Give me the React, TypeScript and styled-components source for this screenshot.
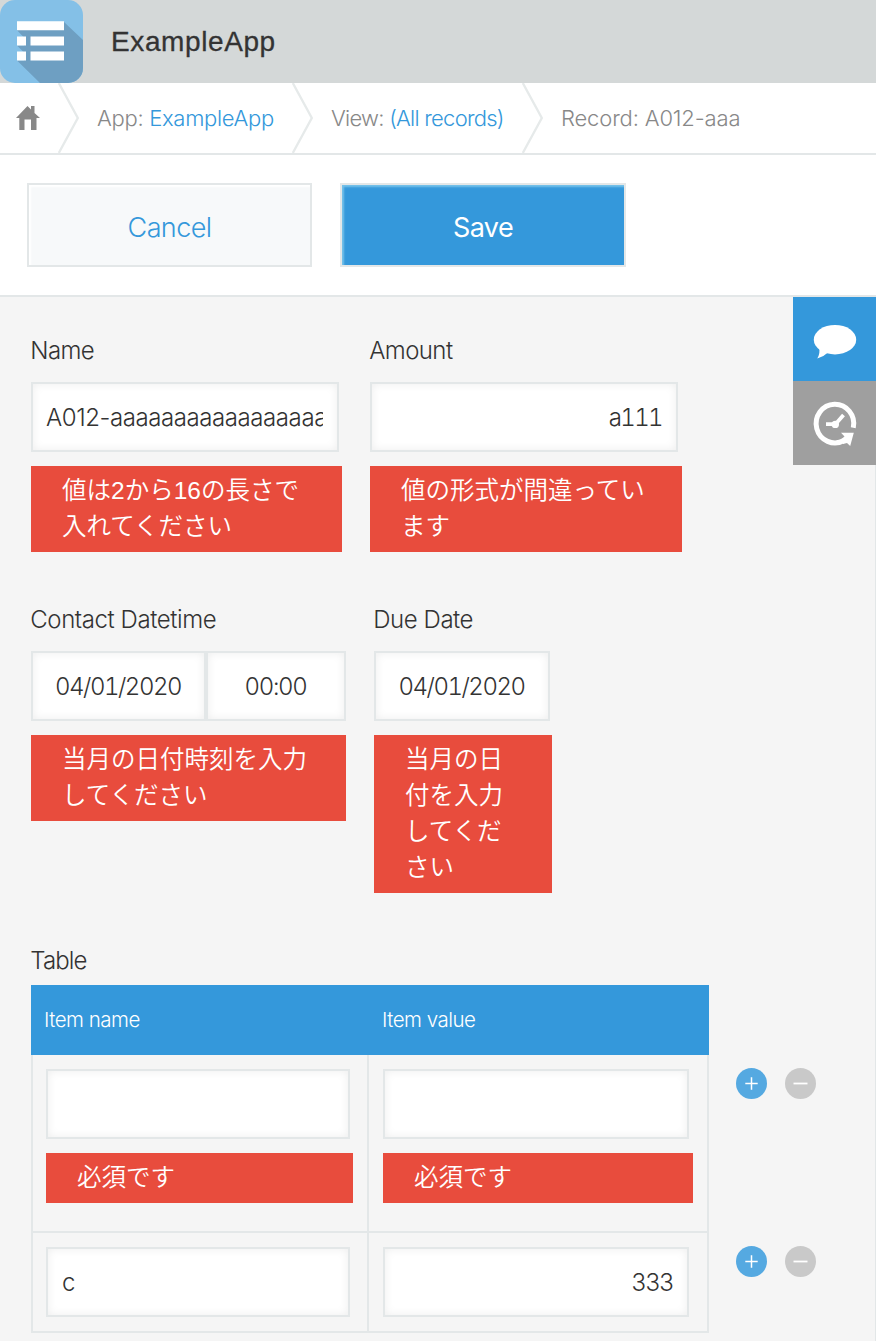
import React from "react";
import styled, { createGlobalStyle } from "styled-components";

const line = "#e3e7e8";
const blue = "#3498db";

const GlobalStyle = createGlobalStyle`
  *, *::before, *::after { box-sizing: border-box; }
  body {
    margin: 0;
    background: #f5f5f5;
    color: #333;
    font-family: Inter, "Noto Sans CJK JP", sans-serif;
    font-weight: 300;
  }
`;

const Page = styled.div`
  width: 876px;
  height: 1341px;
  overflow: hidden;
  display: flex;
  flex-direction: column;
`;

const Header = styled.header`
  display: flex;
  align-items: center;
  gap: 28px;
  height: 83px;
  flex: none;
  background: #d4d8d8;
`;

const AppTitle = styled.h1`
  margin: 0;
  font: 400 28px/36px "Liberation Sans", sans-serif;
  letter-spacing: 0.6px;
  -webkit-text-stroke: 0.3px #333;
`;

const Breadcrumbs = styled.nav`
  display: flex;
  height: 72px;
  flex: none;
  background: #fff;
  border-bottom: 2px solid ${line};
  color: #888;
  font-size: 22px;
  line-height: 70px;
  white-space: nowrap;
`;

const HomeLink = styled.a`
  display: flex;
  align-items: center;
  width: 58px;
  padding-left: 16px;
`;

const Crumb = styled.span<{ $width: number; $spacing: number }>`
  width: ${(p) => p.$width}px;
  padding-left: 18px;
  letter-spacing: ${(p) => p.$spacing}px;
`;

const CrumbLink = styled.a`
  color: ${blue};
`;

const Toolbar = styled.div`
  display: flex;
  gap: 28px;
  height: 142px;
  flex: none;
  padding: 28px 27px;
  background: #fff;
  border-bottom: 2px solid ${line};
`;

const Button = styled.button<{ $primary?: boolean }>`
  width: ${(p) => (p.$primary ? 286 : 285)}px;
  height: 84px;
  padding: 4px 0 0;
  border: 2px solid ${line};
  background: ${(p) => (p.$primary ? blue : "#f7f9fa")};
  color: ${(p) => (p.$primary ? "#fff" : blue)};
  box-shadow: inset 2px 2px 2px ${(p) => (p.$primary ? "#75c1e9" : "#fff")};
  font-family: inherit;
  font-size: 27px;
  font-weight: ${(p) => (p.$primary ? 380 : 300)};
  letter-spacing: -0.6px;
`;

const Body = styled.main`
  position: relative;
  flex: 1;
  padding: 36px 0 0 31px;
  border-right: 1px solid ${line};
`;

const SideTabs = styled.aside`
  position: absolute;
  top: 0;
  right: -1px;
  width: 83px;
`;

const SideTab = styled.div<{ $active?: boolean }>`
  height: 84px;
  background: ${(p) => (p.$active ? blue : "#9f9f9f")};
`;

const FieldRow = styled.div<{ $height: number }>`
  display: flex;
  align-items: flex-start;
  gap: 28px;
  height: ${(p) => p.$height}px;
`;

const Field = styled.div<{ $width: number }>`
  width: ${(p) => p.$width}px;
`;

const Label = styled.div<{ $spacing?: number; $compact?: boolean }>`
  height: ${(p) => (p.$compact ? 42 : 49)}px;
  font-size: 24px;
  line-height: 36px;
  letter-spacing: ${(p) => p.$spacing ?? -0.6}px;
  text-indent: -0.7px;
  white-space: nowrap;
`;

const InputGroup = styled.div`
  display: flex;
`;

const Input = styled.input<{ $width: number; $numeric?: boolean; $align?: string; $spacing?: number }>`
  display: block;
  width: ${(p) => p.$width}px;
  height: 70px;
  padding: 0 14px 0 13px;
  border: 2px solid ${line};
  border-radius: 0;
  outline: none;
  background: #fff;
  box-shadow: inset 0 0 10px #eee;
  color: #333;
  font-family: inherit;
  font-size: 24px;
  font-variant-numeric: ${(p) => (p.$numeric ? "tabular-nums" : "normal")};
  font-weight: 300;
  letter-spacing: ${(p) => p.$spacing ?? -0.42}px;
  text-align: ${(p) => p.$align ?? "left"};
`;

const ErrorBox = styled.div<{ $width: number }>`
  width: ${(p) => p.$width}px;
  margin-top: 14px;
  padding: 7px 31px;
  background: #e84c3d;
  color: #fff;
  font-family: "Liberation Sans", "Noto Sans CJK JP", sans-serif;
  font-size: 24.5px;
  font-weight: 350;
  line-height: 36px;
  word-break: break-all;
`;

const TableHead = styled.div`
  display: flex;
  width: 678px;
  height: 70px;
  background: ${blue};
  color: #fff;
  font-size: 20.5px;
  line-height: 70px;
`;

const HeadCell = styled.div<{ $width: number }>`
  width: ${(p) => p.$width}px;
  padding-left: 13px;
  letter-spacing: -0.5px;
`;

const TableRow = styled.div<{ $height: number }>`
  display: flex;
  height: ${(p) => p.$height}px;
`;

const Cell = styled.div<{ $width: number; $first?: boolean }>`
  width: ${(p) => p.$width}px;
  padding: 14px 0 0 ${(p) => (p.$first ? 13 : 14)}px;
  border-right: 2px solid ${line};
  border-bottom: 2px solid ${line};
  border-left: ${(p) => (p.$first ? `2px solid ${line}` : "0")};

  ${Input} {
    padding-left: 14px;
  }
`;

const RowActions = styled.div`
  display: flex;
  gap: 17px;
  padding: 12px 0 0 26px;
`;

const AppIcon = () => (
  <svg width="83" height="83" viewBox="0 0 83 83">
    <clipPath id="tile">
      <rect width="83" height="83" rx="15" />
    </clipPath>
    <g clipPath="url(#tile)">
      <rect width="83" height="83" fill="#84c0e7" />
      <path d="M64 22L83 40V83H40L17 60.500H24V52.500L17 45.500H24V37.500L17 30.300V29H64Z" fill="#6e9fc2" />
    </g>
    <path d="M17 21.3H64V30.3H17ZM17 36.6H26V45.6H17ZM30.500 36.600H64V45.600H30.500ZM17 51.500H26V60.500H17ZM30.500 51.500H64V60.500H30.500Z" fill="#fff" />
  </svg>
);

const HomeIcon = () => (
  <svg width="24" height="24" viewBox="0 0 24 24" fill="#888">
    <path d="M0 12L11.500 0L15 3.600V0H18.500V7L24 12H20.500V24H15V13.500H8.500V24H3.300V12Z" />
  </svg>
);

const Chevron = () => (
  <svg width="21" height="70" viewBox="0 0 21 70" fill="none" stroke="#e6eaea" strokeWidth="2.300">
    <path d="M.8 0L19.800 35L.8 70" />
  </svg>
);

const CommentIcon = () => (
  <svg width="83" height="84" viewBox="0 0 83 84" fill="#fff">
    <ellipse cx="42" cy="42.700" rx="21.200" ry="14.700" />
    <path d="M26 50Q27.500 56 24.300 61.500Q31 59.500 35 55.500Z" />
  </svg>
);

const HistoryIcon = () => (
  <svg width="83" height="84" viewBox="0 0 83 84" fill="none" stroke="#fff">
    <path d="M60.300 46.700A18.800 19.300 0 1 0 51 59.500" strokeWidth="5" />
    <path d="M48 51.700H60.800L57.200 65L54 62L50 63L48.500 58L51.500 55.500Z" fill="#fff" stroke="none" />
    <path d="M33 43.200H42.500L50.500 34" strokeWidth="3.800" />
    <circle cx="42.300" cy="43.400" r="3.700" fill="#fff" stroke="none" />
  </svg>
);

const RoundIcon = ({ minus = false }: { minus?: boolean }) => (
  <svg width="32" height="32" viewBox="0 0 32 32" stroke="#fff" fill="none">
    <circle cx="16.500" cy="16.500" r="15.500" fill={minus ? "#c9c9c9" : "#55a9e1"} stroke="none" />
    {minus ? <path d="M9.500 16.500H23.500" strokeWidth="1.800" /> : <path d="M10.300 16.500H22.700M16.500 10.300V22.700" strokeWidth="1.500" />}
  </svg>
);

const Actions = () => (
  <RowActions>
    <RoundIcon />
    <RoundIcon minus />
  </RowActions>
);

export default function App() {
  return (
    <Page>
      <GlobalStyle />
      <Header>
        <AppIcon />
        <AppTitle>ExampleApp</AppTitle>
      </Header>
      <Breadcrumbs>
        <HomeLink>
          <HomeIcon />
        </HomeLink>
        <Chevron />
        <Crumb $width={213} $spacing={-0.3}>
          App: <CrumbLink>ExampleApp</CrumbLink>
        </Crumb>
        <Chevron />
        <Crumb $width={209} $spacing={-0.75}>
          View: <CrumbLink>(All records)</CrumbLink>
        </Crumb>
        <Chevron />
        <Crumb $width={300} $spacing={-0.15}>Record: A012-aaa</Crumb>
      </Breadcrumbs>
      <Toolbar>
        <Button>Cancel</Button>
        <Button $primary>Save</Button>
      </Toolbar>
      <Body>
        <FieldRow $height={269}>
          <Field $width={311}>
            <Label>Name</Label>
            <Input $width={308} defaultValue="A012-aaaaaaaaaaaaaaaaaaaa" />
            <ErrorBox $width={311}>値は2から16の長さで入れてください</ErrorBox>
          </Field>
          <Field $width={312}>
            <Label>Amount</Label>
            <Input $width={308} $numeric $spacing={-1.6} $align="right" defaultValue="a111" />
            <ErrorBox $width={312}>値の形式が間違っています</ErrorBox>
          </Field>
        </FieldRow>
        <FieldRow $height={341}>
          <Field $width={315}>
            <Label $spacing={-0.42}>Contact Datetime</Label>
            <InputGroup>
              <Input $width={175} $numeric $spacing={-1.5} $align="center" defaultValue="04/01/2020" />
              <Input $width={140} $numeric $spacing={-1.3} $align="center" defaultValue="00:00" />
            </InputGroup>
            <ErrorBox $width={315}>当月の日付時刻を入力してください</ErrorBox>
          </Field>
          <Field $width={178}>
            <Label $spacing={-0.45}>Due Date</Label>
            <Input $width={176} $numeric $spacing={-1.5} $align="center" defaultValue="04/01/2020" />
            <ErrorBox $width={178}>当月の日付を入力してください</ErrorBox>
          </Field>
        </FieldRow>
        <Label $compact $spacing={-0.9}>Table</Label>
        <TableHead>
          <HeadCell $width={338}>Item name</HeadCell>
          <HeadCell $width={340}>Item value</HeadCell>
        </TableHead>
        <TableRow $height={178}>
          <Cell $first $width={338}>
            <Input $width={304} />
            <ErrorBox $width={307}>必須です</ErrorBox>
          </Cell>
          <Cell $width={340}>
            <Input $width={306} />
            <ErrorBox $width={310}>必須です</ErrorBox>
          </Cell>
          <Actions />
        </TableRow>
        <TableRow $height={100}>
          <Cell $first $width={338}>
            <Input $width={304} defaultValue="c" />
          </Cell>
          <Cell $width={340}>
            <Input $width={306} $numeric $spacing={-1.6} $align="right" defaultValue="333" />
          </Cell>
          <Actions />
        </TableRow>
        <SideTabs>
          <SideTab $active>
            <CommentIcon />
          </SideTab>
          <SideTab>
            <HistoryIcon />
          </SideTab>
        </SideTabs>
      </Body>
    </Page>
  );
}
